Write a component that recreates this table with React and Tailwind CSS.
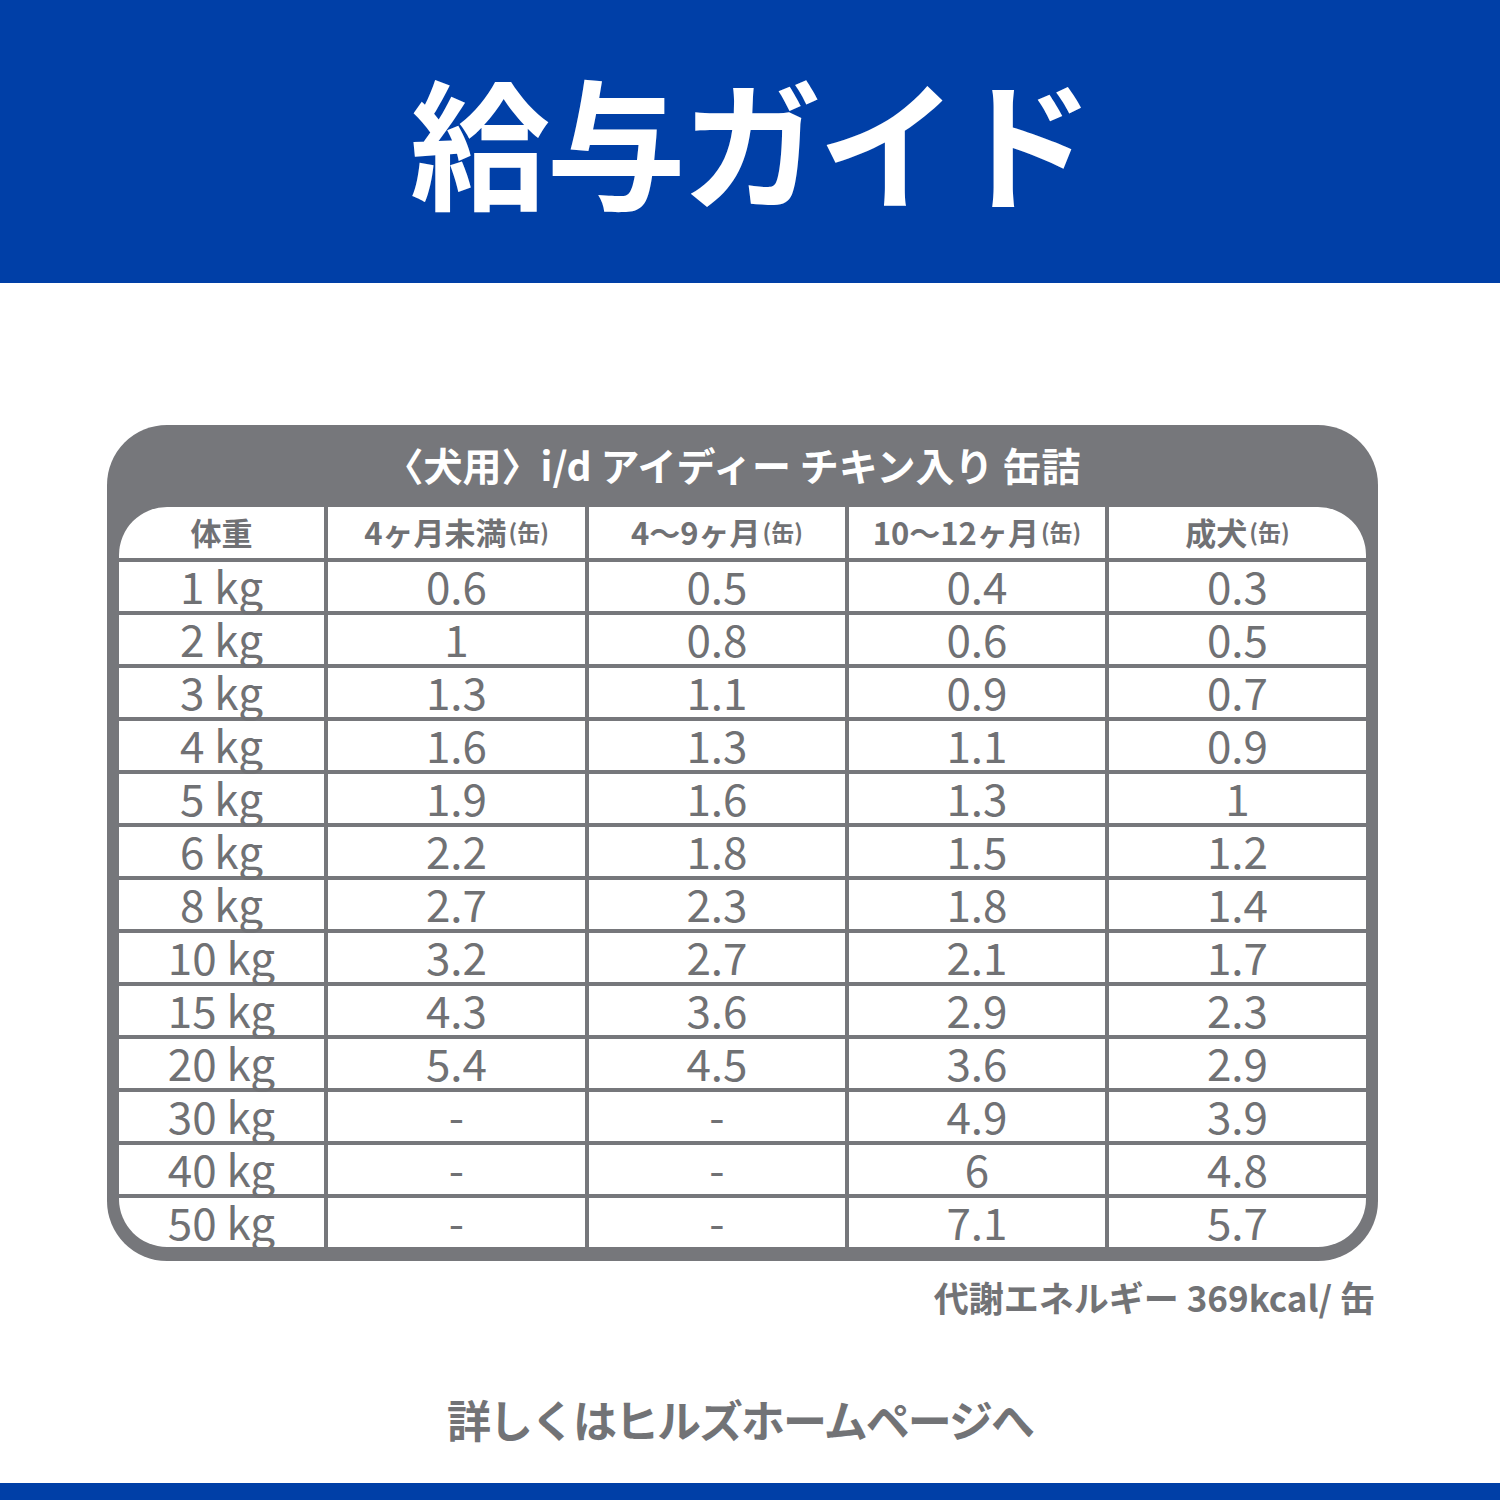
import React from 'react';

const rows = [
  ['1 kg', '0.6', '0.5', '0.4', '0.3'],
  ['2 kg', '1', '0.8', '0.6', '0.5'],
  ['3 kg', '1.3', '1.1', '0.9', '0.7'],
  ['4 kg', '1.6', '1.3', '1.1', '0.9'],
  ['5 kg', '1.9', '1.6', '1.3', '1'],
  ['6 kg', '2.2', '1.8', '1.5', '1.2'],
  ['8 kg', '2.7', '2.3', '1.8', '1.4'],
  ['10 kg', '3.2', '2.7', '2.1', '1.7'],
  ['15 kg', '4.3', '3.6', '2.9', '2.3'],
  ['20 kg', '5.4', '4.5', '3.6', '2.9'],
  ['30 kg', '-', '-', '4.9', '3.9'],
  ['40 kg', '-', '-', '6', '4.8'],
  ['50 kg', '-', '-', '7.1', '5.7'],
];

const headers = [
  { main: '体重' },
  { main: '4ヶ月未満', unit: '(缶)' },
  { main: '4〜9ヶ月', unit: '(缶)' },
  { main: '10〜12ヶ月', unit: '(缶)' },
  { main: '成犬', unit: '(缶)' },
];

const font = { fontFamily: '"Noto Sans CJK JP", "Noto Sans", sans-serif' };

export default function App() {
  return (
    <div className="w-[1500px] h-[1500px] bg-white flex flex-col text-[#707174]" style={font}>
      <div className="h-[283px] bg-[#003fa7] flex items-center justify-center">
        <h1 className="text-[140px] font-bold text-white leading-none tracking-[-4px] -mt-[8px]">給与ガイド</h1>
      </div>

      <div className="mt-[142px] mx-[107px] w-[1271px] bg-[#76777b] rounded-[60px] px-[12px] pb-[14px]">
        <div className="h-[82px] flex items-center justify-center text-white text-[39px] font-bold pb-[4px] pr-[20px]">
          〈犬用〉i/d アイディー チキン入り 缶詰
        </div>
        <div className="rounded-[48px] overflow-hidden grid grid-cols-[205px_257px_256px_256px_257px] gap-[4px] bg-[#76777b]">
          {headers.map((h, i) => (
            <div key={i} className="h-[51px] bg-white flex items-center justify-center font-bold text-[31px] leading-none pb-[2px]">
              {h.main}
              {h.unit && <span className="text-[23px] ml-[2px]">{h.unit}</span>}
            </div>
          ))}
          {rows.map((r, ri) =>
            r.map((c, ci) => (
              <div key={ri + '-' + ci} className="h-[49px] bg-white flex items-center justify-center text-[44px] leading-none pb-[4px]">
                {c}
              </div>
            ))
          )}
        </div>
      </div>

      <div className="mt-[10px] mr-[125px] text-right font-bold text-[35px] text-[#727376]">
        代謝エネルギー 369kcal/ 缶
      </div>

      <div className="mt-[62px] text-center font-semibold text-[44px] text-[#727376] tracking-[-2px] pr-[20px]">
        詳しくはヒルズホームページへ
      </div>

      <div className="mt-auto h-[17px] bg-[#003fa7]" />
    </div>
  );
}
